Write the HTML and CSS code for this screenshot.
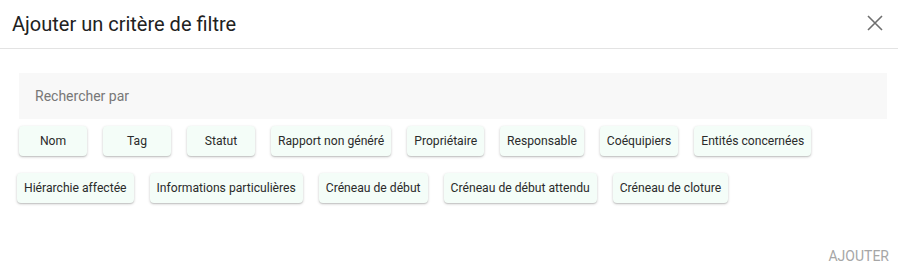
FILE: index.html
```html
<!DOCTYPE html>
<html>
<head>
  <title>Ajouter un critère de filtre</title>
  <link rel="stylesheet" href="styles.css">
</head>
<body>
  <div class="dialog">
    <div class="dialog-header">
      <h2 class="dialog-title">Ajouter un critère de filtre</h2>
      <button class="close-btn" title="Fermer">
        <svg width="24" height="24" viewBox="0 0 24 24">
          <path d="M5 5L19 19M19 5L5 19" stroke="#6f6f6f" stroke-width="1.6" fill="none"/>
        </svg>
      </button>
    </div>

    <div class="dialog-body">
      <div class="search">
        <input type="text" class="search-input" placeholder="Rechercher par">
      </div>

      <div class="chips">
        <button class="chip">Nom</button>
        <button class="chip">Tag</button>
        <button class="chip">Statut</button>
        <button class="chip">Rapport non généré</button>
        <button class="chip">Propriétaire</button>
        <button class="chip">Responsable</button>
        <button class="chip">Coéquipiers</button>
        <button class="chip">Entités concernées</button>
      </div>
      <div class="chips chips-second">
        <button class="chip">Hiérarchie affectée</button>
        <button class="chip">Informations particulières</button>
        <button class="chip">Créneau de début</button>
        <button class="chip">Créneau de début attendu</button>
        <button class="chip">Créneau de cloture</button>
      </div>
    </div>

    <div class="dialog-actions">
      <button class="add-btn" disabled>Ajouter</button>
    </div>
  </div>
</body>
</html>
```

FILE: styles.css
```css
body {
  margin: 0;
  background-color: #fff;
  font-family: Roboto, "Liberation Sans", sans-serif;
  color: #212121;
}

.dialog {
  display: flex;
  flex-direction: column;
}

.dialog-header {
  display: flex;
  align-items: center;
  justify-content: space-between;
  height: 48px;
  padding: 0 11px 0 12px;
  border-bottom: 1px solid #e3e3e3;
}

.dialog-title {
  margin: 0;
  font-size: 20px;
  font-weight: 400;
  line-height: 48px;
  color: #212121;
}

.close-btn {
  display: flex;
  padding: 0;
  border: none;
  background: none;
  cursor: pointer;
  margin-top: -2px;
}

.dialog-body {
  padding: 24px 11px 0 19px;
}

.search {
  height: 46px;
  background-color: #f8f8f8;
  display: flex;
  align-items: center;
}

.search-input {
  flex: 1;
  border: none;
  background: none;
  outline: none;
  padding: 0 16px;
  font-family: inherit;
  font-size: 14px;
  color: #333;
}

.search-input::placeholder {
  color: #777;
}

.chips {
  display: flex;
  flex-wrap: wrap;
  gap: 16px;
  margin-top: 7px;
}

.chips-second {
  margin-top: 17px;
  margin-left: -2px;
}

.chip {
  height: 30px;
  min-width: 68px;
  padding: 0 7px;
  border: none;
  border-radius: 4px;
  background-color: #f4fdf8;
  box-shadow: 0 1px 3px rgba(0, 0, 0, 0.2), 0 1px 1px rgba(0, 0, 0, 0.1);
  font-family: inherit;
  font-size: 12.15px;
  color: #2b2b2b;
  cursor: pointer;
}

.dialog-actions {
  display: flex;
  justify-content: flex-end;
  padding: 37px 1px 0 0;
}

.add-btn {
  padding: 6px 8px;
  border: none;
  background: none;
  font-family: inherit;
  font-size: 14px;
  line-height: 20px;
  text-transform: uppercase;
  color: #a6a6a6;
}
```
